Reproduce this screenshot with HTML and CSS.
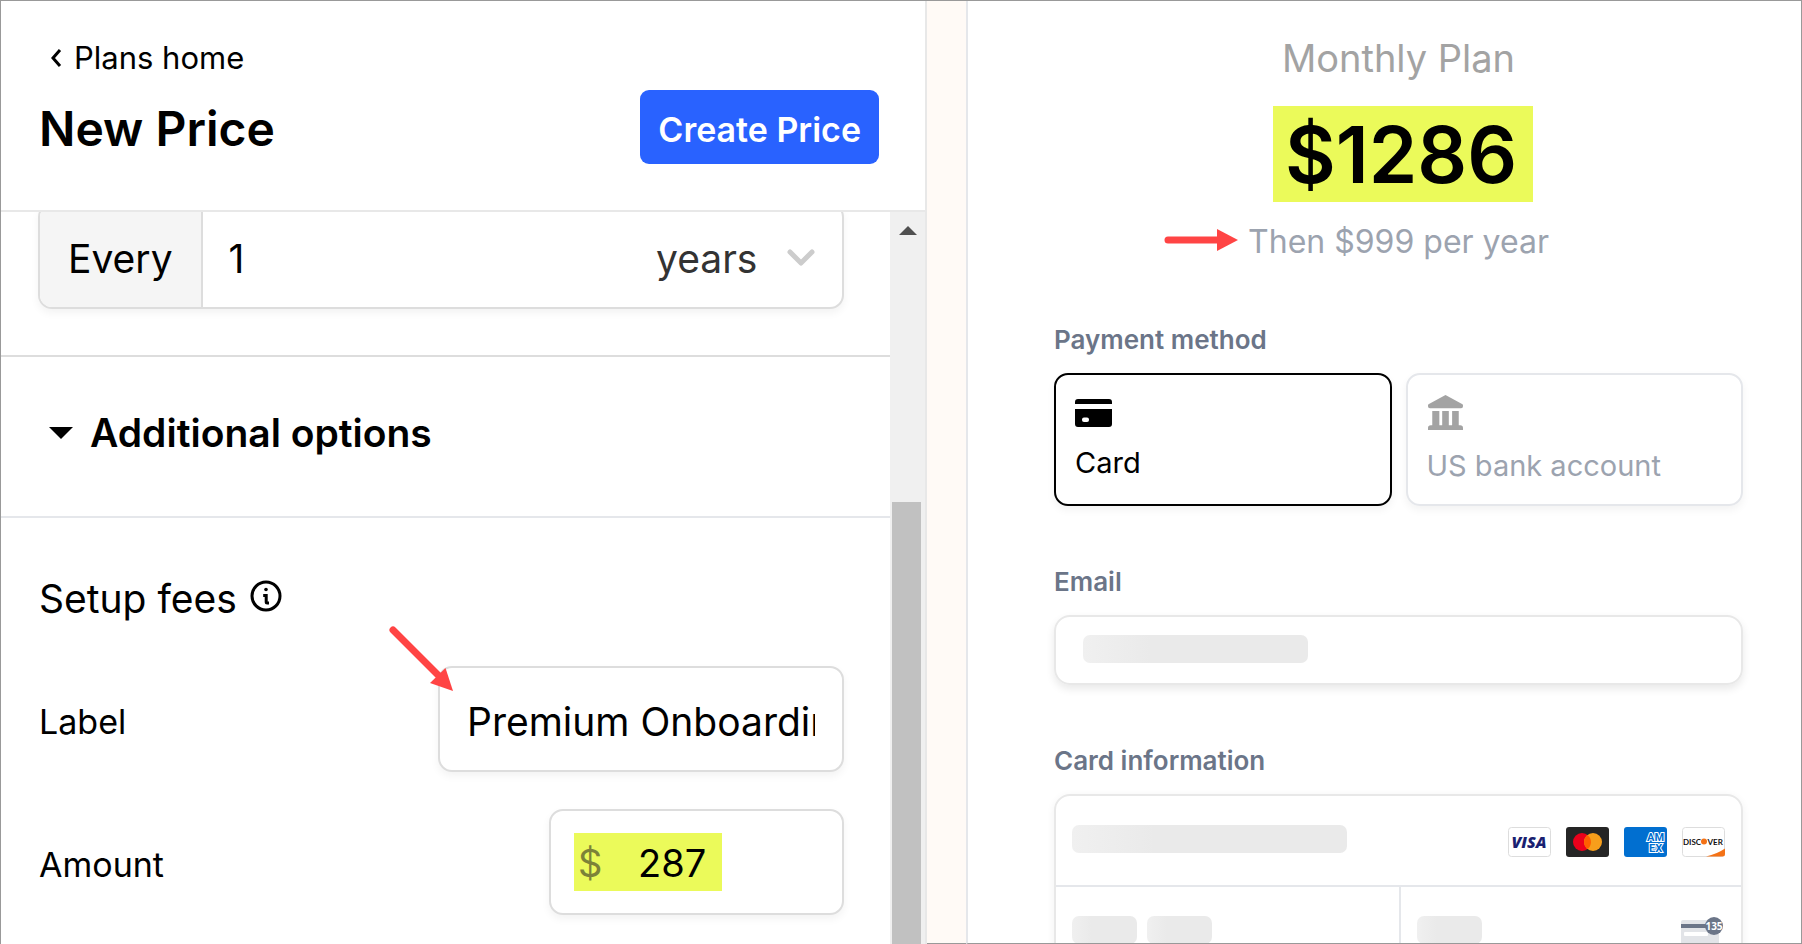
FILE: index.html
```html
<!DOCTYPE html>
<html lang="en">
<head>
<meta charset="utf-8">
<title>New Price</title>
<link rel="stylesheet" href="styles.css">
</head>
<body>
<div class="app">
  <section class="editor">
    <header class="editor-head">
      <a class="back" href="#plans">
        <svg class="back-icon" viewBox="0 0 12 20" aria-hidden="true"><path d="M10 2 L3 10 L10 18"/></svg>
        Plans home
      </a>
      <div class="title-row">
        <h1>New Price</h1>
        <button class="primary" type="button">Create Price</button>
      </div>
    </header>
    <div class="scroller">
      <div class="form">
        <div class="billing">
          <div class="interval field">
            <label class="interval-label" for="every">Every</label>
            <input class="interval-count" id="every" type="text" value="1">
            <select class="interval-unit" aria-label="Interval unit"><option>years</option></select>
            <svg class="chevron" viewBox="0 0 28 18" aria-hidden="true"><path d="M3 3 L14 14 L25 3"/></svg>
          </div>
        </div>
        <button class="options-toggle" type="button">
          <svg class="caret" viewBox="0 0 24 12" aria-hidden="true"><path d="M0 0 H24 L12 12 Z"/></svg>
          Additional options
        </button>
        <div class="fees">
          <h2 class="fees-title">Setup fees
            <svg class="info" viewBox="0 0 32 32" aria-hidden="true"><circle class="ring" cx="16" cy="16" r="14"/><circle cx="16" cy="9.5" r="1.8"/><path class="stem" d="M13.2 15.5 H16.2 V22 Q16.2 23 17.2 23 H19"/></svg>
          </h2>
          <div class="fee-row">
            <label for="fee-label">Label</label>
            <div class="field name-field">
              <input class="text-input" id="fee-label" type="text" value="Premium Onboarding">
              <svg class="arrow-diagonal" viewBox="0 0 66 68" aria-hidden="true"><path class="shaft" d="M5 5 L50 50"/><path class="head" d="M65 66 L57.500 43 L42 58 Z"/></svg>
            </div>
          </div>
          <div class="fee-row">
            <label for="fee-amount">Amount</label>
            <div class="field amount-field">
              <span class="amount-mark"><span class="currency">$</span><input class="amount-input" id="fee-amount" type="text" value="287"></span>
            </div>
          </div>
        </div>
      </div>
      <div class="scrollbar" aria-hidden="true">
        <svg class="scroll-up" viewBox="0 0 18 9"><path d="M0 9 L9 0 L18 9 Z"/></svg>
        <div class="thumb"></div>
      </div>
    </div>
  </section>
  <div class="gutter"></div>
  <section class="checkout">
    <div class="summary">
      <p class="plan">Monthly Plan</p>
      <p class="price">$1286</p>
      <p class="then"><svg class="arrow-right" viewBox="0 0 74 22" aria-hidden="true"><path class="shaft" d="M4 11 H54"/><path class="head" d="M53 0 L74 11 L53 22 Z"/></svg>Then $999 per year</p>
    </div>
    <div class="group">
      <h3>Payment method</h3>
      <div class="methods">
        <label class="method selected">
          <input type="radio" name="method" checked>
          <svg class="card-icon" viewBox="0 0 37 28" aria-hidden="true"><path d="M3 0 H34 Q37 0 37 3 V5 H0 V3 Q0 0 3 0 Z M0 10 H37 V25 Q37 28 34 28 H3 Q0 28 0 25 Z"/><rect class="chip" x="7" y="18.500" width="7" height="4.500" rx="2"/></svg>
          <span>Card</span>
        </label>
        <label class="method">
          <input type="radio" name="method">
          <svg class="bank-icon" viewBox="0 0 37 37" aria-hidden="true"><path d="M18.500 0 L36 9.500 Q37 10 37 11 V12 Q37 14 35 14 H2 Q0 14 0 12 V11 Q0 10 1 9.500 Z M4.500 17 H12 V32 H15 V17 H22 V32 H25.500 V17 H32.500 V32 H34 Q37 32 37 35 V37 H0 V35 Q0 32 3 32 H4.500 Z"/></svg>
          <span>US bank account</span>
        </label>
      </div>
    </div>
    <div class="group">
      <label class="group-label" for="email">Email</label>
      <div class="email-box"><span class="skeleton wide"></span><input id="email" type="email"></div>
    </div>
    <div class="group">
      <h3>Card information</h3>
      <div class="card-box">
        <div class="number-row">
          <span class="skeleton number"></span>
          <div class="brands">
            <svg class="brand" viewBox="0 0 43 30" role="img" aria-label="Visa"><rect class="plate" x=".5" y=".5" width="42" height="29" rx="3"/><text class="visa-text" x="21" y="21">VISA</text></svg>
            <svg class="brand" viewBox="0 0 43 30" role="img" aria-label="Mastercard"><rect width="43" height="30" rx="3" fill="#252525"/><circle cx="16" cy="15" r="9" fill="#eb001b"/><circle cx="27" cy="15" r="9" fill="#f79e1b"/><path d="M21.500 7.900 A9 9 0 0 1 21.500 22.100 A9 9 0 0 1 21.500 7.900 Z" fill="#ff5f00"/></svg>
            <svg class="brand" viewBox="0 0 43 30" role="img" aria-label="American Express"><rect width="43" height="30" rx="3" fill="#016fd0"/><text class="amex-text" x="23" y="14">AM</text><text class="amex-text" x="25" y="25">EX</text></svg>
            <svg class="brand" viewBox="0 0 43 30" role="img" aria-label="Discover"><rect class="plate" x=".5" y=".5" width="42" height="29" rx="3"/><path d="M24 29.500 Q35 27 43 21.500 V27 Q43 29.500 40.500 29.500 Z" fill="#f47216"/><text class="discover-text" x="1" y="17.500">DISC</text><circle cx="22" cy="14.500" r="3" fill="#f47216"/><text class="discover-text" x="25.500" y="17.500">VER</text></svg>
          </div>
        </div>
        <div class="detail-row">
          <div class="cell"><span class="skeleton short"></span><span class="skeleton short"></span></div>
          <div class="cell cvc"><span class="skeleton short"></span>
            <svg class="cvc-icon" viewBox="0 0 44 36" aria-hidden="true"><rect x="0" y="4" width="38" height="30" rx="2" fill="#e2e4e8"/><rect x="0" y="8" width="30" height="4" fill="#6b7588"/><rect x="3" y="16" width="24" height="4" rx="1" fill="#fff"/><circle cx="33" cy="10" r="9" fill="#6b7588"/><text class="cvc-text" x="33" y="13.500">135</text></svg>
          </div>
        </div>
      </div>
    </div>
  </section>
</div>
</body>
</html>
```
FILE: styles.css
```css
* { box-sizing: border-box; }

body {
  margin: 0;
  font-family: Inter, "Open Sans", sans-serif;
  color: #000;
  background: #fff;
}

h1, h2, h3, p { margin: 0; }

input, select, button {
  font: inherit;
  color: inherit;
  border: 0;
  background: none;
  padding: 0;
  min-width: 0;
}

.app {
  display: grid;
  grid-template-columns: minmax(0, 926fr) 39px minmax(0, 835fr);
  height: 100vh;
  overflow: hidden;
  border: 1px solid #999;
  border-bottom: 0;
}

/* Price editor */
.editor {
  display: flex;
  flex-direction: column;
  min-height: 0;
  border-right: 2px solid #e8e8e8;
}

.editor-head {
  padding: 39px 46px 46px 38px;
  border-bottom: 2px solid #e8e8e8;
}

.back {
  display: inline-flex;
  align-items: center;
  gap: 12px;
  padding-left: 11px;
  font-size: 31px;
  line-height: 36px;
  color: #000;
  text-decoration: none;
}

.back-icon { width: 12px; height: 20px; }
.back-icon path { fill: none; stroke: #000; stroke-width: 3; }

.title-row {
  display: flex;
  justify-content: space-between;
  align-items: center;
  margin-top: 14px;
}

h1 { padding-top: 4px; font-size: 48px; line-height: 56px; font-weight: 600; }

.primary {
  height: 74px;
  padding: 4px 18px 0;
  border-radius: 9px;
  background: #2962ff;
  color: #fff;
  font-size: 34px;
  font-weight: 600;
}

.scroller { display: flex; flex: 1; min-height: 0; overflow: hidden; }
.form { flex: 1; min-width: 0; }

.field {
  position: relative;
  display: flex;
  align-items: center;
  height: 106px;
  border: 2px solid #ddd;
  border-radius: 14px;
  background: #fff;
  box-shadow: 0 4px 8px rgba(0, 0, 0, 0.05);
  font-size: 39px;
}

.billing {
  padding: 0 46px 46px 37px;
  border-bottom: 2px solid #ddd;
}

.interval { margin-top: -9px; }

.interval-label {
  display: flex;
  align-items: center;
  align-self: stretch;
  padding: 4px 28px 0;
  border-right: 2px solid #ddd;
  border-radius: 12px 0 0 12px;
  background: #f5f5f5;
}

.interval-count { flex: 1; padding: 4px 0 0 26px; }
.interval-unit { appearance: none; width: 131px; padding-top: 4px; color: #333; }
.chevron { width: 28px; height: 18px; margin: 4px 27px 0 0; }
.chevron path { fill: none; stroke: #ccc; stroke-width: 5; stroke-linecap: round; stroke-linejoin: round; }

.options-toggle {
  display: flex;
  align-items: center;
  gap: 17px;
  width: 100%;
  padding: 48px 0 55px 48px;
  border-bottom: 2px solid #e5e7eb;
  font-size: 39px;
  line-height: 56px;
  font-weight: 600;
}

.caret { width: 24px; height: 12px; }

.fees {
  display: flex;
  flex-direction: column;
  gap: 37px;
  padding: 53px 46px 0 38px;
}

.fees-title {
  display: flex;
  align-items: center;
  gap: 13px;
  margin-bottom: 2px;
  font-size: 39px;
  line-height: 56px;
  font-weight: 400;
}

.info { width: 32px; height: 32px; margin-bottom: 6px; }
.info .ring, .info .stem { fill: none; stroke: #000; stroke-width: 3; }

.fee-row {
  display: flex;
  justify-content: space-between;
  align-items: center;
  font-size: 34px;
}

.fee-row label { padding-top: 4px; }
.name-field { width: 406px; padding: 4px 27px 0; }
.text-input { width: 100%; }
.amount-field { width: 295px; padding: 0 23px; }

.amount-mark {
  display: flex;
  align-items: center;
  justify-content: space-between;
  width: 148px;
  height: 58px;
  padding: 2px 4px 0;
  background: #ebfa5a;
  font-size: 38px;
}

.currency { color: #7c8238; }
.amount-input { width: 80px; }

.shaft { fill: none; stroke: #ff4444; stroke-width: 7; stroke-linecap: round; }
.head { fill: #ff4444; }

.arrow-diagonal {
  position: absolute;
  left: -52px;
  top: -43px;
  width: 66px;
  height: 68px;
}

.scrollbar { width: 35px; padding: 14px 4px 0 2px; background: #f0f0f0; }
.scroll-up { display: block; width: 18px; height: 9px; margin-left: 7px; fill: #505050; }
.thumb { height: 100%; margin-top: 267px; background: #c1c1c1; }

.gutter { background: #fffaf6; border-bottom: 1px solid #999; }

/* Checkout preview */
.checkout {
  display: flex;
  flex-direction: column;
  gap: 60px;
  min-height: 0;
  overflow: hidden;
  padding: 33px 58px 0 86px;
  border-left: 2px solid #e5e7eb;
  border-bottom: 1px solid #999;
}

.summary { display: flex; flex-direction: column; align-items: center; }
.plan { font-size: 38px; line-height: 48px; color: #a3a3a3; }

.price {
  margin: 24px 0 18px 9px;
  padding: 2px 16px 0 12px;
  background: #ebfa5a;
  font-size: 78px;
  line-height: 94px;
  font-weight: 600;
}

.then { position: relative; font-size: 32px; line-height: 44px; color: #9ca3af; }
.arrow-right { position: absolute; right: 100%; top: 9px; width: 74px; height: 22px; margin-right: 10px; }

h3, .group-label {
  display: block;
  margin-bottom: 17px;
  font-size: 26px;
  line-height: 32px;
  font-weight: 600;
  color: #6b7588;
}

.methods { display: grid; grid-template-columns: 1fr 1fr; gap: 14px; }

.method {
  display: flex;
  flex-direction: column;
  align-items: flex-start;
  gap: 18px;
  height: 133px;
  padding: 20px 19px;
  border: 2px solid #e5e7eb;
  border-radius: 14px;
  box-shadow: 0 4px 8px rgba(0, 0, 0, 0.05);
  font-size: 29px;
  line-height: 36px;
  color: #9ca3af;
}

.method input { position: absolute; opacity: 0; }
.method.selected { padding-top: 24px; border-color: #000; color: #000; }
.card-icon { width: 37px; height: 28px; }
.chip { fill: #fff; }
.bank-icon { width: 37px; height: 37px; fill: #a3a3a3; }

.email-box {
  display: flex;
  padding: 18px 27px 20px;
  border: 2px solid #e8e8e8;
  border-radius: 16px;
  box-shadow: 0 4px 8px rgba(0, 0, 0, 0.09);
}

.email-box input { flex: 1; height: 28px; }

.skeleton {
  flex: none;
  width: 65px;
  height: 28px;
  border-radius: 7px;
  background: linear-gradient(90deg, #f0f0f0, #eaeaea 30%);
}

.skeleton.wide { width: 225px; }
.skeleton.number { width: 275px; }

.card-box {
  border: 2px solid #e8e8e8;
  border-radius: 16px;
  box-shadow: 0 2px 8px rgba(0, 0, 0, 0.06);
}

.number-row {
  display: flex;
  justify-content: space-between;
  padding: 29px 16px 28px;
  border-bottom: 2px solid #e5e7eb;
}

.brands { display: flex; gap: 15px; padding-top: 2px; }
.brand { width: 43px; height: 30px; }
.plate { fill: #fff; stroke: #ddd; }
.visa-text { font: italic 800 16px "Open Sans", sans-serif; fill: #1a1f71; text-anchor: middle; }
.amex-text { font: 700 11px/1 Roboto, sans-serif; fill: #016fd0; stroke: #fff; stroke-width: 2; paint-order: stroke; }
.discover-text { font: 700 8px Lato, sans-serif; fill: #111; }
.cvc-text { font: 700 10px "Open Sans", sans-serif; fill: #fff; text-anchor: middle; }

.detail-row { display: grid; grid-template-columns: 1fr 1fr; height: 91px; }
.cell { display: flex; gap: 10px; padding: 29px 16px; }
.cvc { justify-content: space-between; border-left: 2px solid #e5e7eb; }
.cvc-icon { width: 44px; height: 36px; }
```
